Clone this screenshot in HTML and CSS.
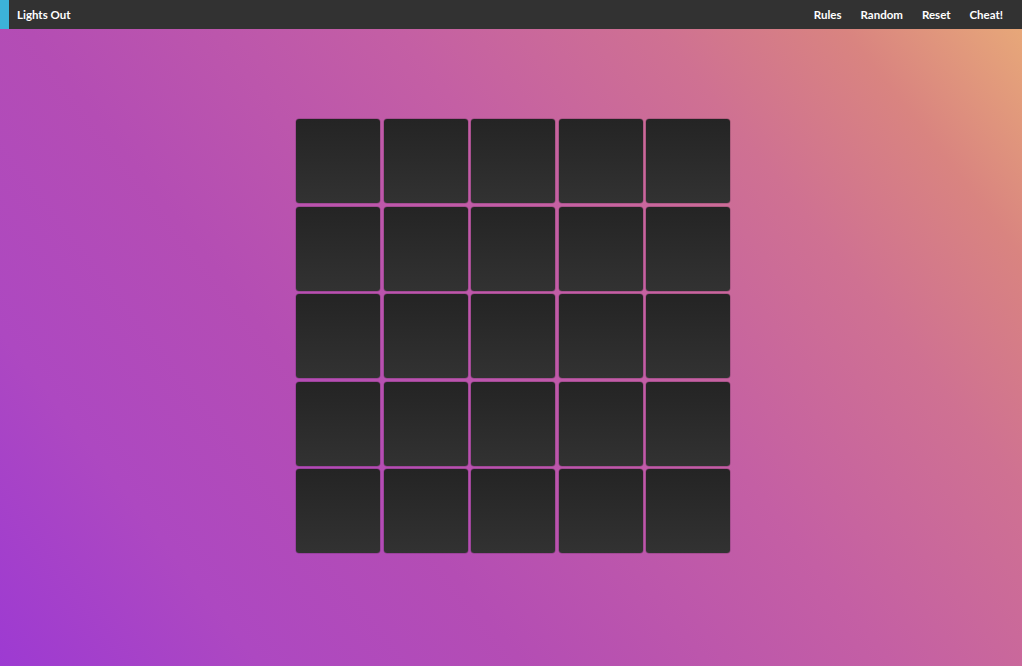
FILE: index.html
```html
<!DOCTYPE html>
<html lang="en">
<head>
<meta charset="utf-8">
<title>Lights Out</title>
<link rel="stylesheet" href="styles.css">
</head>
<body>
<header class="navbar">
  <div class="brand">Lights Out</div>
  <nav class="links">
    <a class="link" href="#">Rules</a>
    <a class="link" href="#">Random</a>
    <a class="link" href="#">Reset</a>
    <a class="link" href="#">Cheat!</a>
  </nav>
</header>
<main class="stage">
  <div class="board">
    <div class="tile"></div><div class="tile"></div><div class="tile"></div><div class="tile"></div><div class="tile"></div>
    <div class="tile"></div><div class="tile"></div><div class="tile"></div><div class="tile"></div><div class="tile"></div>
    <div class="tile"></div><div class="tile"></div><div class="tile"></div><div class="tile"></div><div class="tile"></div>
    <div class="tile"></div><div class="tile"></div><div class="tile"></div><div class="tile"></div><div class="tile"></div>
    <div class="tile"></div><div class="tile"></div><div class="tile"></div><div class="tile"></div><div class="tile"></div>
  </div>
</main>
</body>
</html>
```

FILE: styles.css
```css
html, body {
  margin: 0;
  padding: 0;
  height: 100%;
}
body {
  font-family: "Lato", "Liberation Sans", sans-serif;
  background: linear-gradient(52deg, #9d3ad2 0%, #ad48c1 17%, #b44db4 34%, #c45fa4 58%, #cf7192 75%, #d98480 87%, #e9ac78 100%);
  background-attachment: fixed;
  overflow: hidden;
}
.navbar {
  height: 29px;
  background: #323232;
  border-left: 9px solid #3cb3d9;
  display: flex;
  align-items: center;
  justify-content: space-between;
  box-sizing: border-box;
}
.brand {
  color: #fff;
  font-weight: 700;
  font-size: 11.5px;
  padding-left: 8px;
}
.links {
  display: flex;
  gap: 19px;
  padding-right: 19px;
}
.link {
  color: #fff;
  font-weight: 700;
  font-size: 11.5px;
  text-decoration: none;
}
.stage {
  display: flex;
  justify-content: center;
  padding-top: 90px;
  padding-left: 4px;
}
.board {
  display: grid;
  grid-template-columns: repeat(5, 84px);
  grid-auto-rows: 84px;
  gap: 3.5px;
}
.tile {
  border-radius: 3px;
  background: linear-gradient(180deg, #242424 0%, #2b2b2b 50%, #323232 100%);
  box-shadow: 0 0 0 0.5px rgba(40, 20, 40, 0.35);
}
```
